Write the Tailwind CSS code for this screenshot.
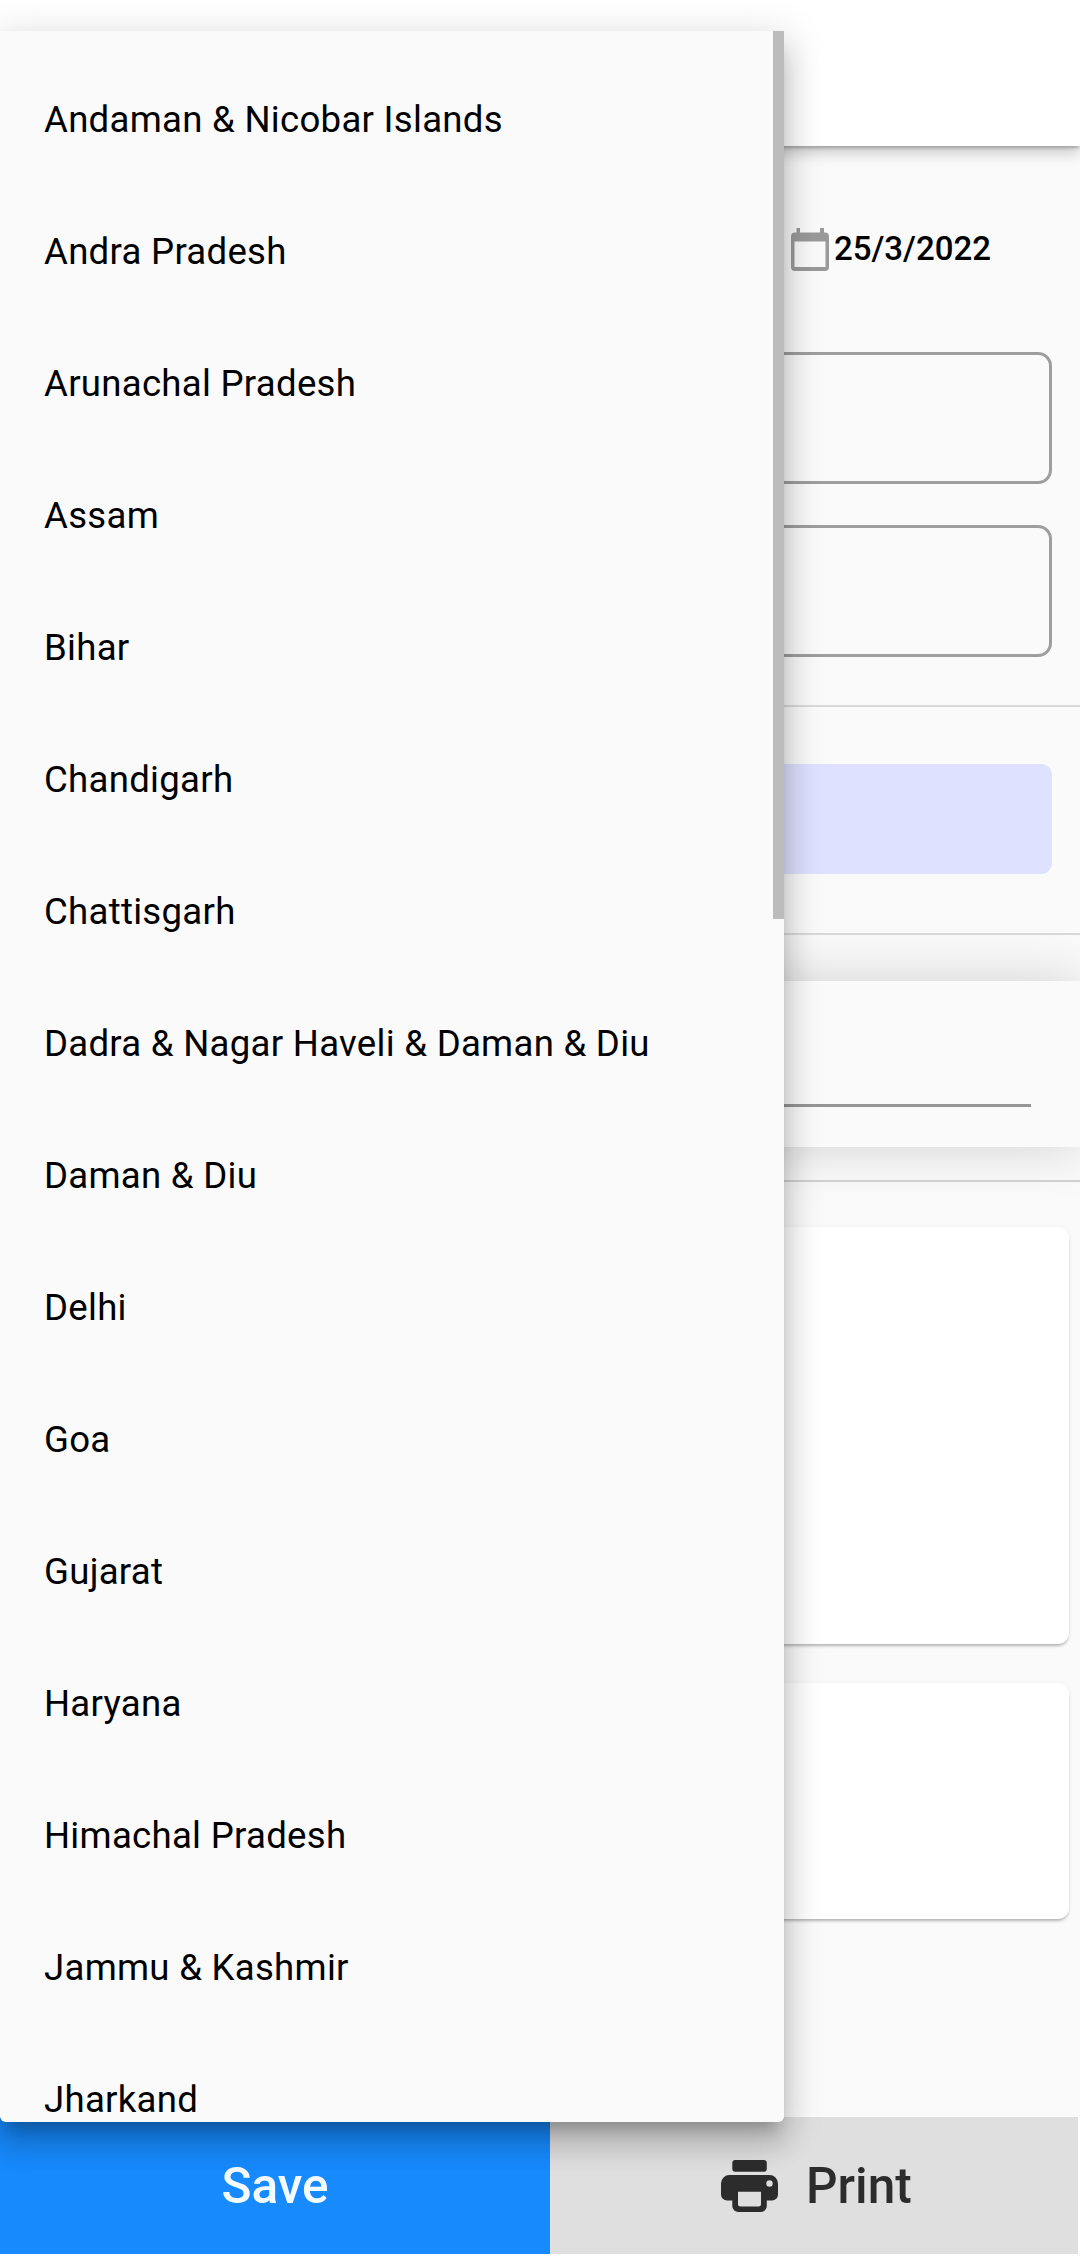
<!DOCTYPE html>
<html lang="en">
<head>
<meta charset="utf-8">
<title>Select state</title>
<script src="https://cdn.jsdelivr.net/npm/@tailwindcss/browser@4"></script>
</head>
<body class="relative flex h-[2259px] w-[1080px] flex-col overflow-hidden bg-[#fafafa] font-[Roboto,sans-serif] text-black">
  <header class="relative h-[146px] shrink-0 bg-white shadow-[0_3px_3px_-1px_rgba(0,0,0,0.22),0_6px_14px_0_rgba(0,0,0,0.22)]"></header>

  <main class="flex h-[1971px] shrink-0 flex-col">
    <div class="mt-[76px] flex h-[55px] items-center justify-end pr-[89px]">
      <svg class="mr-[5px] h-[43px] w-[38px]" viewBox="0 0 38 43" fill="#9a9a9a">
        <path fill-rule="evenodd" d="M5.500 0h3.500v4.500h20V0h4v4.500h1a4 4 0 0 1 4 4v30.500a4 4 0 0 1-4 4H4a4 4 0 0 1-4-4V8.500a4 4 0 0 1 4-4h1.500zM3.500 13.500v25.500h31V13.500z"/>
      </svg>
      <span class="pb-[3px] text-[33px] leading-none font-medium">25/3/2022</span>
    </div>
    <div class="mt-[75px] mr-[28px] ml-[28px] h-[132px] shrink-0 rounded-[14px] border-3 border-[#9e9e9e]"></div>
    <div class="mt-[41px] mr-[28px] ml-[28px] h-[132px] shrink-0 rounded-[14px] border-3 border-[#9e9e9e]"></div>
    <div class="mt-[48px] h-[2px] shrink-0 bg-[#dadada]"></div>
    <div class="mt-[57px] mr-[28px] ml-[28px] h-[110px] shrink-0 rounded-[11px] bg-[#dee1ff]"></div>
    <div class="mt-[59px] h-[2px] shrink-0 bg-[#dadada]"></div>
    <section class="mt-[46px] flex h-[166px] shrink-0 flex-col justify-end bg-[#fafafa] pr-[49px] pb-[40px] pl-[48px] shadow-[0_0_55px_0_rgba(0,0,0,0.17)]">
      <div class="h-[3px] bg-[#969696]"></div>
    </section>
    <div class="relative mt-[33px] h-[2px] shrink-0 bg-[#d0d0d0]"></div>
    <section class="relative mt-[45px] mr-[11px] ml-[11px] h-[417px] shrink-0 rounded-[11px] bg-white shadow-[0_3px_3px_-1px_rgba(0,0,0,0.24),0_1px_4px_0_rgba(0,0,0,0.08)]"></section>
    <section class="mt-[39px] mr-[11px] ml-[11px] h-[236px] shrink-0 rounded-[11px] bg-white shadow-[0_3px_3px_-1px_rgba(0,0,0,0.24),0_1px_4px_0_rgba(0,0,0,0.08)]"></section>
  </main>

  <footer class="flex h-[142px] shrink-0 bg-white pr-[2px] pb-[5px] text-[49.5px] leading-none font-medium">
    <button class="flex w-[550px] items-center justify-center bg-[#178afd] pt-[3px] text-[#f4fbff]">Save</button>
    <button class="flex flex-1 items-center gap-[28px] bg-[#dfdfdf] pl-[171px] text-[#2c2c2c]">
      <svg class="h-[52px] w-[57px]" viewBox="0 0 57 52" fill="currentColor">
        <rect x="11.300" y="0" width="34.500" height="11.700" rx="3"/>
        <path fill-rule="evenodd" d="M8.500 15h40a8.500 8.500 0 0 1 8.500 8.500V34.500a6 6 0 0 1-6 6h-5.200V46a6 6 0 0 1-6 6H17.300a6 6 0 0 1-6-6v-5.500H6a6 6 0 0 1-6-6V23.500A8.500 8.500 0 0 1 8.500 15zM17 31.700V44a2.500 2.500 0 0 0 2.500 2.500h18a2.500 2.500 0 0 0 2.500-2.500V31.700zM48.500 20.300a3.200 3.200 0 1 0 0 6.400a3.200 3.200 0 1 0 0-6.400z"/>
      </svg>
      <span class="pt-[3px]">Print</span>
    </button>
  </footer>

  <!-- Open dropdown menu, overlaying the form -->
  <div class="absolute top-[31px] left-0 h-[2091px] w-[784px] rounded-b-[6px] shadow-[0_14px_14px_-8px_rgba(0,0,0,0.2),0_22px_28px_3px_rgba(0,0,0,0.14),0_8px_39px_6px_rgba(0,0,0,0.12)]">
    <div class="relative h-full overflow-hidden rounded-b-[6px] bg-[#fafafa] pt-[23px]">
      <ul class="text-[36.600px] leading-[38px] tracking-[0.280px]">
        <li class="flex h-[132px] items-center pl-[44px]">Andaman &amp; Nicobar Islands</li>
        <li class="flex h-[132px] items-center pl-[44px]">Andra Pradesh</li>
        <li class="flex h-[132px] items-center pl-[44px]">Arunachal Pradesh</li>
        <li class="flex h-[132px] items-center pl-[44px]">Assam</li>
        <li class="flex h-[132px] items-center pl-[44px]">Bihar</li>
        <li class="flex h-[132px] items-center pl-[44px]">Chandigarh</li>
        <li class="flex h-[132px] items-center pl-[44px]">Chattisgarh</li>
        <li class="flex h-[132px] items-center pl-[44px]">Dadra &amp; Nagar Haveli &amp; Daman &amp; Diu</li>
        <li class="flex h-[132px] items-center pl-[44px]">Daman &amp; Diu</li>
        <li class="flex h-[132px] items-center pl-[44px]">Delhi</li>
        <li class="flex h-[132px] items-center pl-[44px]">Goa</li>
        <li class="flex h-[132px] items-center pl-[44px]">Gujarat</li>
        <li class="flex h-[132px] items-center pl-[44px]">Haryana</li>
        <li class="flex h-[132px] items-center pl-[44px]">Himachal Pradesh</li>
        <li class="flex h-[132px] items-center pl-[44px]">Jammu &amp; Kashmir</li>
        <li class="flex h-[132px] items-center pl-[44px]">Jharkand</li>
      </ul>
      <div class="absolute top-0 right-0 h-[888px] w-[11px] bg-[#bcbcbc]"></div>
    </div>
  </div>
</body>
</html>
